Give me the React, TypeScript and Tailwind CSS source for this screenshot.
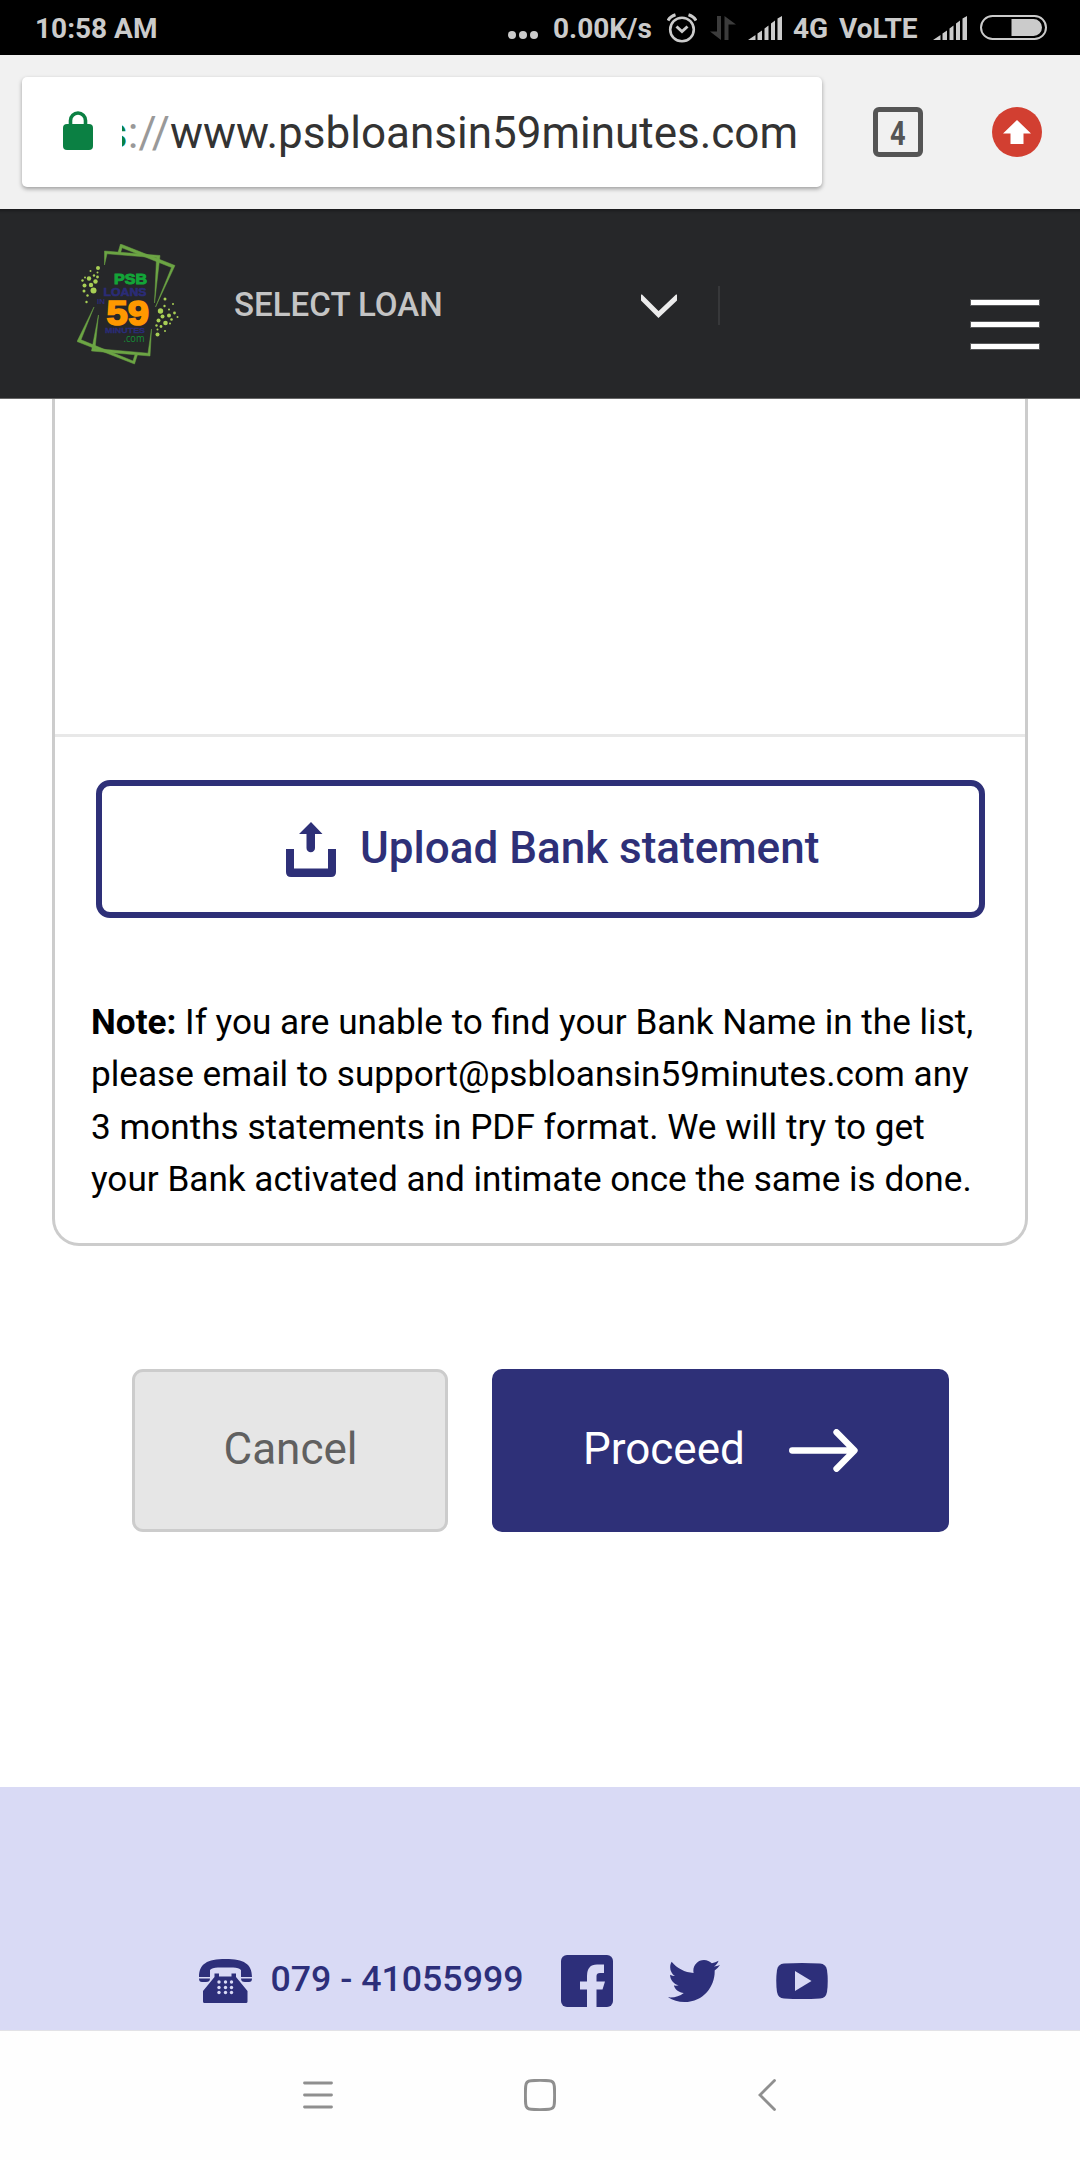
import React from "react";
import { FaTwitter } from "react-icons/fa";

function Signal() {
  return (
    <svg width="34" height="24" viewBox="0 0 34 24" fill="#cbcbcb" className="block shrink-0">
      <path d="M0 24L7.5 19V24ZM9.5 17.5L14 14.5V24H9.5ZM16.5 12.5L20.5 9.5V24H16.5ZM23 7.5L27 4.5V24H23ZM29.5 2.5L34 0V24H29.5Z" />
    </svg>
  );
}

function StatusBar() {
  return (
    <div className="flex h-[55px] items-center bg-black pl-[35px] pr-[33px] text-[28px] font-bold leading-none text-[#cbcbcb]">
      <span className="w-[473px] whitespace-nowrap pt-[2px]">10:58 AM</span>
      <svg width="30" height="8" viewBox="0 0 30 8" fill="#cbcbcb" className="mt-[15px] shrink-0">
        <circle cx="4" cy="4" r="4" />
        <circle cx="15" cy="4" r="4" />
        <circle cx="26" cy="4" r="4" />
      </svg>
      <span className="ml-[15px] w-[100px] shrink-0 whitespace-nowrap pt-[2px]">0.00K/s</span>
      <svg width="30" height="30" viewBox="0 0 30 30" fill="none" stroke="#cbcbcb" strokeWidth="2.6" className="ml-[14px] shrink-0">
        <circle cx="15" cy="16.5" r="11.8" />
        <path d="M9.5 13.5L15 18.5L20.5 13.5" strokeWidth="3" />
        <path d="M1 7.5Q3 3.5 8.5 1.7M29 7.5Q27 3.5 21.500 1.7" strokeWidth="3" />
      </svg>
      <svg width="26" height="24" viewBox="0 0 26 24" fill="#3c3c3c" className="ml-[13px] shrink-0">
        <path d="M7 0H11V24L0 15.500H7ZM14.500 0L26 8.500H18.500V24H14.500Z" />
      </svg>
      <div className="ml-[12px] shrink-0"><Signal /></div>
      <span className="ml-[11px] w-[46px] shrink-0 whitespace-nowrap pt-[2px]">4G</span>
      <span className="w-[94px] shrink-0 whitespace-nowrap pt-[2px]">VoLTE</span>
      <Signal />
      <svg width="67" height="25" viewBox="0 0 67 25" className="ml-[13px] shrink-0">
        <rect x="1" y="1" width="65" height="23" rx="11.500" fill="none" stroke="#cbcbcb" strokeWidth="2" />
        <path d="M31.500 4H53.500A8.500 8.500 0 0 1 53.500 21H31.500Z" fill="#cbcbcb" />
      </svg>
    </div>
  );
}

function BrowserBar() {
  return (
    <div className="flex h-[154px] items-center bg-[#f1f1f1] pb-px pl-[22px] pr-[38px]">
      <div className="mt-[1px] flex h-[110px] w-[800px] items-center rounded-[5px] bg-white pl-[41px] pr-[24px] shadow-[0_2px_4px_rgba(0,0,0,0.35)]">
        <svg width="30" height="39" viewBox="0 0 30 39" className="-mt-[4px] shrink-0">
          <path d="M7.500 15V9.500A7.500 7.500 0 0 1 22.500 9.500V15" fill="none" stroke="#0b8043" strokeWidth="3.600" />
          <rect x="0" y="13" width="30" height="26" rx="4" fill="#0b8043" />
        </svg>
        <div className="ml-[29px] flex h-[70px] flex-1 items-center justify-end overflow-hidden whitespace-nowrap pt-[2px] text-[44px] text-[#333]">
          <span className="text-[#0b8043]">https</span>
          <span className="text-[#999]">://</span>
          <span>www.psbloansin59minutes.com</span>
        </div>
      </div>
      <div className="ml-[51px] flex size-[50px] items-center justify-center rounded-[6px] border-[5px] border-[#555] pt-[2px] text-[34px] font-bold leading-none text-[#555]">
        <span className="scale-x-[0.8]">4</span>
      </div>
      <svg width="50" height="50" viewBox="0 0 50 50" className="ml-auto">
        <circle cx="25" cy="25" r="25" fill="#d23f31" />
        <path d="M25 13L39 26.500H31.500V37H18.500V26.500H11Z" fill="#fff" />
      </svg>
    </div>
  );
}

const dots: [number, number, number][] = [
  [21, 24, 2], [13.500, 27, 1], [20.500, 28.500, 1], [17, 31.500, 1.200], [12, 34.500, 2.200], [20.500, 33, 1.400], [8, 33.500, 1],
  [5.500, 36.500, 1.200], [18.500, 37.500, 2.200], [7.500, 41.500, 2], [14, 41, 2.200], [16.500, 46.500, 3], [7, 47, 1.500], [10.500, 51.500, 1.200], [9.500, 58, 1.200],
  [88, 55, 1.500], [96, 60, 1], [87.500, 62, 1.200], [83.500, 67, 2.700], [92, 65.500, 1], [97.500, 69, 1.400], [85.500, 72.500, 2], [92, 71.500, 2],
  [100.500, 73, 1], [81.500, 76.500, 2], [88.500, 79, 2.300], [94.500, 75.500, 1.300], [79.500, 81.500, 1.200], [84, 82.500, 1.400], [93, 79.500, 1], [80.500, 85.500, 1], [88, 87, 1], [80.500, 90.500, 2],
];

function Logo() {
  return (
    <svg width="102" height="121" viewBox="0 0 102 121" className="shrink-0">
      <g fill="#6ca544">
        <path d="M27.500 21V7L83 11.500L77.500 59L79.500 13.800L30 9.800Z" stroke="#6ca544" strokeWidth="0.500" />
        <path d="M41 8.500L43.500 0L98 21.500L78.500 63L94.500 23.500L45 3.800L43.500 9Z" stroke="#6ca544" strokeWidth="0.500" />
        <path d="M74.500 85L73 112L14.500 107L21.500 71L18 104.500L71 109.200Z" stroke="#6ca544" strokeWidth="0.500" />
        <path d="M17 63L0 97.500L57.500 120L60.500 110.500H58L56 117L4 95.800Z" stroke="#6ca544" strokeWidth="0.500" />
      </g>
      <g fill="#a8cf55">
        {dots.map(([x, y, r], i) => (
          <circle key={i} cx={x} cy={y} r={r} />
        ))}
      </g>
      <g fontFamily="'Liberation Sans'" fontWeight="bold">
        <text x="37" y="40" fontSize="15.500" fill="#13a538" stroke="#13a538" strokeWidth="1" textLength="33" lengthAdjust="spacingAndGlyphs">PSB</text>
        <text x="26.500" y="51.500" fontSize="11.500" fill="#2b2c77" stroke="#2b2c77" strokeWidth="0.600" textLength="43" lengthAdjust="spacingAndGlyphs">LOANS</text>
        <text x="20" y="60" fontSize="7" fill="#2b2c77" textLength="8" lengthAdjust="spacingAndGlyphs">IN</text>
        <text x="29.500" y="80.500" fontSize="35" fill="#ff9800" stroke="#ff9800" strokeWidth="1.700" textLength="42.500" lengthAdjust="spacingAndGlyphs">59</text>
        <text x="28" y="89" fontSize="8" fill="#2b2c77" stroke="#2b2c77" strokeWidth="0.300" textLength="40" lengthAdjust="spacingAndGlyphs">MINUTES</text>
      </g>
      <text x="46.500" y="98" fontSize="11" fontFamily="'Open Sans'" fill="#158f36" textLength="21" lengthAdjust="spacingAndGlyphs">.com</text>
    </svg>
  );
}

function SiteHeader() {
  return (
    <header className="flex h-[190px] items-start border-b border-[#666] bg-[#262729] pl-[77px] pr-[40px] shadow-[inset_0_5px_3px_-3px_rgba(0,0,0,0.3)]">
      <div className="mt-[35px]"><Logo /></div>
      <span className="ml-[55px] mt-[75px] w-[407px] whitespace-nowrap text-[33.100px] font-medium leading-[42px] text-[#c4c4c4]">SELECT LOAN</span>
      <svg width="36" height="26" viewBox="0 0 36 26" className="mt-[84px]">
        <path d="M-1 3L17.500 21.500L37 3" fill="none" stroke="#ececec" strokeWidth="5" />
      </svg>
      <div className="ml-[41px] mt-[77px] h-[39px] w-[2px] bg-[#37383a]" />
      <div className="ml-auto mt-[90px] flex w-[70px] flex-col gap-[15px]">
        <div className="h-[7px] border border-[#58595b] bg-white" />
        <div className="h-[7px] border border-[#58595b] bg-white" />
        <div className="h-[7px] border border-[#58595b] bg-white" />
      </div>
    </header>
  );
}

function StatementCard() {
  return (
    <section className="mx-[52px] w-[976px] rounded-b-[27px] border-x-[3px] border-b-[3px] border-[#ccc]">
      <div className="h-[338px] border-b-[3px] border-[#e8e8e8]" />
      <button className="ml-[41px] mt-[43px] flex h-[138px] w-[889px] items-center rounded-[14px] border-[6px] border-[#2e3078] pl-[184px] text-[#2e3078]">
        <svg width="50" height="55" viewBox="0 0 50 55" className="shrink-0" fill="#2e3078">
          <path d="M0 27H8V46.500H42V27H50V50Q50 55 45 55H5Q0 55 0 50Z" />
          <path d="M25 0L36.500 12H29V26A4 4 0 0 1 20.500 26V12H13Z" />
        </svg>
        <span className="ml-[24px] whitespace-nowrap pb-[2px] text-[44px] font-medium leading-none">Upload Bank statement</span>
      </button>
      <p className="ml-[36px] mt-[78px] whitespace-nowrap pb-[37.400px] text-[35.150px] leading-[52.400px] text-black">
        <b>Note:</b> If you are unable to find your Bank Name in the list,<br />
        please email to support@psbloansin59minutes.com any<br />
        3 months statements in PDF format. We will try to get<br />
        your Bank activated and intimate once the same is done.
      </p>
    </section>
  );
}

function Actions() {
  return (
    <div className="ml-[132px] mt-[123px] flex h-[163px] gap-[44px] text-[44px]">
      <button className="w-[316px] rounded-[11px] border-[3px] border-[#ccc] bg-[#e6e6e6] pb-[4px] pl-px text-[#606060]">Cancel</button>
      <button className="flex w-[457px] items-center rounded-[10px] bg-[#2e3078] pl-[91px] text-white">
        <span className="w-[206px] pb-[4px] text-left">Proceed</span>
        <svg width="69" height="43" viewBox="0 0 69 43" fill="none" stroke="#fff" strokeWidth="6.300" strokeLinecap="round" strokeLinejoin="round">
          <path d="M3.200 21.500H64M47.500 3.200L65.500 21.500L47.500 39.800" />
        </svg>
      </button>
    </div>
  );
}

function SiteFooter() {
  return (
    <footer className="flex h-[243px] items-start bg-[#d9daf5] pl-[199px] text-[#2d2f7a]">
      <svg width="53" height="44" viewBox="0 0 53 44" fill="#2d2f7a" className="mt-[172px] shrink-0">
        <path d="M0 18C0 5 8 0 26.500 0S53 5 53 18H42V11Q40 8.500 34 8.500H19Q13 8.500 11 11V18Z" />
        <path d="M0 19.500H11Q11 23 7 23H3Q0 23 0 19.500ZM42 19.500H53Q53 23 50 23H46Q42 23 42 19.500Z" />
        <path d="M15.500 18V14.500H20V17.500H32.500V14.500H37V18L48.500 32V42.500Q48.500 44 47 44H5.500Q4 44 4 42.500V32Z" />
        <g fill="#d9daf5">
          {[20, 26.500, 32.500].map((x) => [23, 28.500, 33.500].map((y) => <circle key={`${x}-${y}`} cx={x} cy={y} r="1.700" />))}
        </g>
      </svg>
      <span className="ml-[18.500px] mt-[171px] w-[290.500px] whitespace-nowrap text-[35.700px] font-medium leading-[42px]">079 - 41055999</span>
      <svg width="52" height="52" viewBox="0 0 52 52" className="mt-[168px] shrink-0">
        <rect width="52" height="52" rx="6" fill="#2d2f7a" />
        <path d="M26 52V34.500H19V26.500H26V21Q26 9.500 36 9.500H43V18H39Q35.500 18 35.500 21V26.500H44L41.500 34.500H35.500V52Z" fill="#d9daf5" />
      </svg>
      <FaTwitter size={52} className="ml-[55px] mt-[168px] shrink-0" />
      <svg width="52" height="36" viewBox="0 0 52 36" className="ml-[56px] mt-[176px] shrink-0">
        <path d="M8 .5Q26-.5 44 .5Q50 1 51 7Q52.500 18 51 29Q50 35 44 35.500Q26 36.500 8 35.500Q2 35 1 29Q-.5 18 1 7Q2 1 8 .5Z" fill="#2d2f7a" />
        <path d="M19 8L35.500 18L19 28Z" fill="#d9daf5" />
      </svg>
    </footer>
  );
}

function NavBar() {
  return (
    <nav className="flex h-[130px] items-center border-t border-[#e2e2e6] bg-[#fefefe] pb-[2px] pl-[303px] text-[#8f8f8f]">
      <svg width="30" height="30" viewBox="0 0 30 30" fill="none" stroke="currentColor" strokeWidth="2.800" strokeLinecap="round">
        <path d="M1.500 3H28.500M1.500 15H28.500M1.500 27H28.500" />
      </svg>
      <svg width="32" height="32" viewBox="0 0 32 32" fill="none" stroke="currentColor" strokeWidth="3" className="ml-[191px]">
        <path d="M7 1.700Q16 1 25 1.700Q30 2 30.300 7Q31 16 30.300 25Q30 30 25 30.300Q16 31 7 30.300Q2 30 1.700 25Q1 16 1.700 7Q2 2 7 1.700Z" />
      </svg>
      <svg width="18" height="32" viewBox="0 0 18 32" fill="none" stroke="currentColor" strokeWidth="2.800" strokeLinecap="round" className="ml-[202px]">
        <path d="M16.500 1.500L2 16L16.500 30.500" />
      </svg>
    </nav>
  );
}

export default function App() {
  return (
    <div className="flex h-[2160px] w-[1080px] flex-col overflow-hidden bg-white font-['Roboto',sans-serif]">
      <StatusBar />
      <BrowserBar />
      <SiteHeader />
      <StatementCard />
      <Actions />
      <div className="mt-auto">
        <SiteFooter />
        <NavBar />
      </div>
    </div>
  );
}
